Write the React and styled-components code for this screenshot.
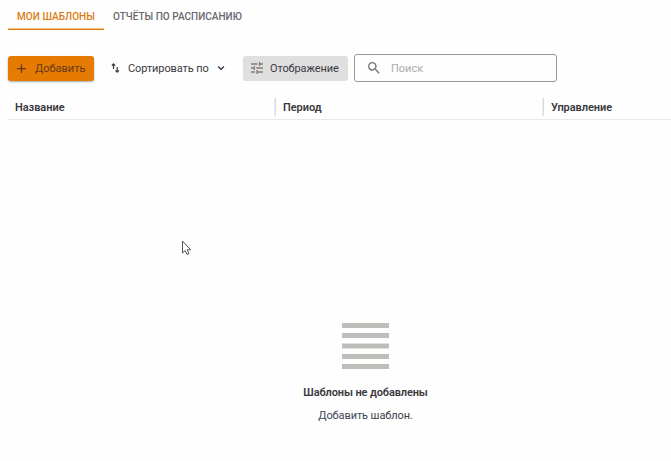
import React from "react";
import styled, { createGlobalStyle } from "styled-components";
import { MdAdd, MdSearch, MdTune } from "react-icons/md";

const GlobalStyle = createGlobalStyle`
  * { box-sizing: border-box; }
  body { margin: 0; background: #fefefe; overflow: hidden; }
`;

const Page = styled.main`
  position: relative;
  display: flex;
  flex-direction: column;
  width: 671px;
  height: 461px;
  padding-left: 8px;
  overflow: hidden;
  background: #fefefe;
  color: #38383d;
  font-family: Roboto, "Liberation Sans", sans-serif;
  font-size: 11px;
  white-space: nowrap;
`;

const Tabs = styled.nav`
  display: flex;
  height: 30px;
`;

const Tab = styled.button`
  height: 30px;
  padding: 3px 9px 0;
  border: 0;
  border-bottom: ${(p) => (p.$active ? "1px solid #e57c08" : "0")};
  box-shadow: ${(p) => (p.$active ? "inset 0 -1px #f3c38e" : "none")};
  background: none;
  color: ${(p) => (p.$active ? "#dc7b10" : "#68686e")};
  font: 500 10px Roboto, sans-serif;
  letter-spacing: ${(p) => p.$spacing};
  text-transform: uppercase;
`;

const Toolbar = styled.div`
  display: flex;
  align-items: center;
  height: 28px;
  margin-top: 24px;
`;

const Button = styled.button`
  display: flex;
  align-items: center;
  width: ${(p) => p.$width};
  height: 25px;
  margin-right: ${(p) => p.$after || "0"};
  padding: 0 0 0 ${(p) => p.$inset || "7px"};
  gap: ${(p) => p.$gap || "8px"};
  border: 0;
  border-radius: 3px;
  background: ${(p) => p.$fill || "transparent"};
  box-shadow: ${(p) => (p.$raised ? "0 1px 2px rgba(0, 0, 0, .35)" : "none")};
  color: ${(p) => p.$color || "#3a3a3e"};
  font: 400 11px Roboto, sans-serif;
  letter-spacing: ${(p) => p.$spacing || "0"};
  svg { flex: none; }
`;

const SearchBox = styled.label`
  display: flex;
  align-items: center;
  width: 203px;
  height: 28px;
  padding-left: 11px;
  gap: 9px;
  border: 1px solid #98989a;
  border-radius: 3px;
  color: #77706c;
`;

const SearchInput = styled.input`
  width: 150px;
  padding: 0;
  border: 0;
  outline: 0;
  background: none;
  font: 400 11px Roboto, sans-serif;
  &::placeholder { color: #aaaaac; opacity: 1; }
`;

const TableHeader = styled.div`
  display: grid;
  grid-template-columns: 267px 268px 1fr;
  align-items: center;
  height: 25px;
  margin-top: 13px;
  border-bottom: 1px solid #e8e8ea;
`;

const HeaderCell = styled.div`
  display: flex;
  align-items: center;
  height: 18px;
  padding-left: ${(p) => (p.$divided ? "8px" : "7px")};
  box-shadow: ${(p) => (p.$divided ? "inset 1px 0 #dcdcde, -1px 0 #ececee" : "none")};
  font-size: 11px;
  font-weight: 600;
  letter-spacing: -0.05px;
`;

const EmptyState = styled.section`
  display: flex;
  flex-direction: column;
  align-items: center;
  width: 715px;
  margin: 202px 0 0 0;
`;

const ListIcon = styled.svg`
  display: block;
  width: 47px;
  height: 48px;
`;

const EmptyTitle = styled.h2`
  margin: 14px 0 0;
  font-size: 11px;
  font-weight: 600;
  line-height: 17px;
  letter-spacing: -0.12px;
`;

const EmptyHint = styled.p`
  margin: 6px 0 0;
  line-height: 17px;
  letter-spacing: -0.1px;
  color: #3c3c42;
`;

const HintAction = styled.span`
  color: #3f4559;
`;

const Cursor = styled.svg`
  position: absolute;
  left: 181px;
  top: 240px;
`;

export default function App() {
  return (
    <Page>
      <GlobalStyle />
      <Tabs>
        <Tab $active $spacing="0.05px">Мои шаблоны</Tab>
        <Tab $spacing="0.02px">Отчёты по расписанию</Tab>
      </Tabs>
      <Toolbar>
        <Button $width="86px" $after="10px" $fill="#e67b04" $raised $color="#653a16" $inset="6px" $gap="6px" $spacing="-0.02px">
          <MdAdd size={15} />Добавить
        </Button>
        <Button $width="125px" $after="14px" $gap="8px" $spacing="-0.1px">
          <svg width="9" height="12" viewBox="0 0 9 12" fill="none" stroke="currentColor" strokeWidth="1.2">
            <path d="M2.5 7V2.2M.8 3.6 2.5 1.8l1.7 1.8M6.2 5v4.8M4.5 8.4l1.7 1.8 1.7-1.8" />
          </svg>
          Сортировать по
          <svg width="8" height="6" viewBox="0 0 8 6" fill="none" stroke="currentColor" strokeWidth="1.3">
            <path d="m1 1.5 3 2.8 3-2.8" />
          </svg>
        </Button>
        <Button $width="105px" $after="6px" $fill="#dfdfe0" $inset="6px" $gap="5px" $spacing="-0.1px">
          <MdTune size={16} color="#857d79" />Отображение
        </Button>
        <SearchBox>
          <MdSearch size={16} />
          <SearchInput placeholder="Поиск" aria-label="Поиск" />
        </SearchBox>
      </Toolbar>
      <TableHeader>
        <HeaderCell>Название</HeaderCell>
        <HeaderCell $divided>Период</HeaderCell>
        <HeaderCell $divided>Управление</HeaderCell>
      </TableHeader>
      <EmptyState>
        <ListIcon viewBox="0 0 47 48" fill="#bdbdb9">
          <path d="M0 1h47v5H0zM0 11h47v5H0zM0 21.5h47v5H0zM0 32h47v5H0zM0 42h47v5H0z" />
        </ListIcon>
        <EmptyTitle>Шаблоны не добавлены</EmptyTitle>
        <EmptyHint><HintAction>Добавить</HintAction> шаблон.</EmptyHint>
      </EmptyState>
      <Cursor width="12" height="17" viewBox="0 0 12 17" fill="#fff" stroke="#55555c" strokeWidth="1">
        <path d="M1.5 1v12l2.7-2.5 1.8 4 2-1-1.8-3.7h3.5z" />
      </Cursor>
    </Page>
  );
}
